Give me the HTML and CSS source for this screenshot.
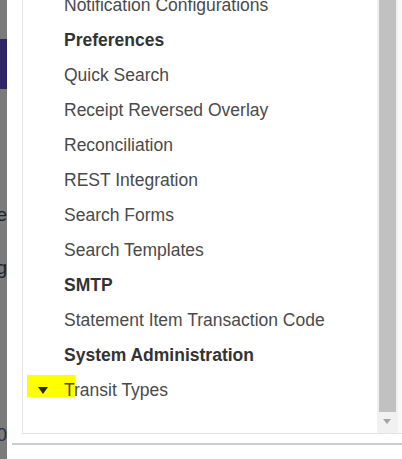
FILE: index.html
```html
<!DOCTYPE html>
<html>
<head>
<meta charset="utf-8">
<link rel="stylesheet" href="styles.css">
</head>
<body>
<div class="screen">
  <div class="backdrop">
    <div class="bd-band"></div>
    <div class="bd-text t1">ie</div>
    <div class="bd-text t2">ag</div>
    <div class="bd-text t3">0</div>
  </div>
  <div class="panel">
    <div class="listbox">
      <div class="list-view">
        <ul class="list">
          <li class="item">Notification Configurations</li>
          <li class="item group">Preferences</li>
          <li class="item">Quick Search</li>
          <li class="item">Receipt Reversed Overlay</li>
          <li class="item">Reconciliation</li>
          <li class="item">REST Integration</li>
          <li class="item">Search Forms</li>
          <li class="item">Search Templates</li>
          <li class="item group">SMTP</li>
          <li class="item">Statement Item Transaction Code</li>
          <li class="item group">System Administration</li>
          <li class="item current"><span class="marker"><span class="tri"></span></span>Transit Types</li>
        </ul>
      </div>
      <div class="scrollbar">
        <div class="thumb"></div>
        <div class="arrow"></div>
      </div>
      <div class="edge"></div>
    </div>
    <div class="footer-rule"></div>
  </div>
</div>
</body>
</html>
```
FILE: styles.css
```css
* { box-sizing: border-box; }
html, body { margin: 0; padding: 0; }
body {
  width: 402px;
  height: 459px;
  overflow: hidden;
  background: #ffffff;
  font-family: "Liberation Sans", Arial, sans-serif;
}
.screen {
  display: flex;
  width: 402px;
  height: 459px;
}
.backdrop {
  position: relative;
  width: 7px;
  flex: none;
  background: #7b7b7b;
  overflow: hidden;
}
.bd-band {
  position: absolute;
  left: 0;
  top: 39px;
  width: 7px;
  height: 50px;
  background: #2f2565;
}
.bd-text {
  position: absolute;
  right: 0;
  font-size: 19px;
  color: #1c2230;
  line-height: 22px;
  white-space: nowrap;
}
.bd-text.t1 { top: 204px; }
.bd-text.t2 { top: 257px; }
.bd-text.t3 { top: 424px; color: #24304a; }
.panel {
  flex: 1;
  display: flex;
  flex-direction: column;
  padding-left: 5px;
}
.listbox {
  margin-left: 10px;
  height: 434px;
  display: flex;
  border-left: 1px solid #e3e3e3;
  border-bottom: 1px solid #e3e3e3;
}
.list-view {
  flex: 1;
  overflow: hidden;
  position: relative;
}
.list {
  list-style: none;
  margin: -12px 0 0 0;
  padding: 0;
}
.item {
  position: relative;
  height: 35px;
  line-height: 35px;
  padding-left: 41px;
  font-size: 17.5px;
  color: #4a4a4a;
  white-space: nowrap;
}
.item.group {
  font-weight: bold;
  color: #333333;
}
.marker {
  position: absolute;
  left: 4px;
  top: 2px;
  width: 48px;
  height: 22px;
  background: #ffff00;
  z-index: -1;
}
.current { z-index: 0; }
.tri {
  position: absolute;
  left: 11px;
  top: 12px;
  width: 0;
  height: 0;
  border-left: 5px solid transparent;
  border-right: 5px solid transparent;
  border-top: 7px solid #2a2a1a;
}
.scrollbar {
  width: 21px;
  flex: none;
  background: #f1f1f1;
  position: relative;
}
.thumb {
  position: absolute;
  left: 2px;
  right: 2px;
  top: 0;
  height: 412px;
  background: #c1c1c1;
}
.arrow {
  position: absolute;
  left: 6px;
  top: 419px;
  width: 0;
  height: 0;
  border-left: 4.5px solid transparent;
  border-right: 4.5px solid transparent;
  border-top: 5px solid #a3a3a3;
}
.edge {
  width: 4px;
  flex: none;
  background: #f9f9f9;
}
.footer-rule {
  margin-top: 9px;
  height: 2px;
  border-top: 2px solid #cdcdcd;
}
```
